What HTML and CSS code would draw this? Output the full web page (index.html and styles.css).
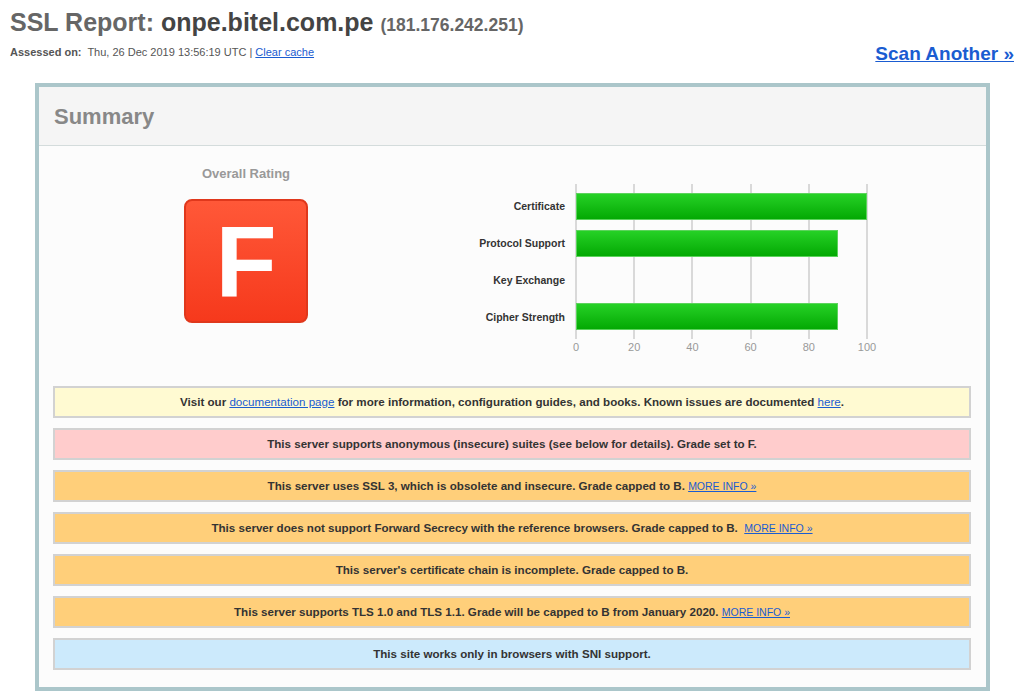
FILE: index.html
```html
<!DOCTYPE html>
<html>
	<head>
		<meta charset="utf-8">
		<title>SSL Report: onpe.bitel.com.pe</title>
		<link rel="stylesheet" href="styles.css">
	</head>
	<body>
		<div class="pageHead">
			<div class="headLeft">
				<h1 class="reportTitle">SSL Report: <b>onpe.bitel.com.pe</b> <span class="ip">(181.176.242.251)</span></h1>
				<div class="assessed">
					<span class="assessedLabel">Assessed on:</span> Thu, 26 Dec 2019 13:56:19 UTC | <a href="">Clear cache</a>
				</div>
			</div>
			<a href="" class="scanAnother">Scan Another &raquo;</a>
		</div>

		<div class="reportBox">
			<div class="reportTitleBar">Summary</div>
			<div class="reportBody">
				<div class="summaryRow">
					<div class="rating">
						<div class="ratingTitle">Overall Rating</div>
						<div class="grade">F</div>
					</div>
					<div class="chart">
						<div class="chartLabels">
							<div>Certificate</div>
							<div>Protocol Support</div>
							<div>Key Exchange</div>
							<div>Cipher Strength</div>
						</div>
						<div class="chartRight">
							<div class="plot">
								<div class="bar" style="width: 291px"></div>
								<div class="bar" style="width: 262px"></div>
								<div class="bar empty"></div>
								<div class="bar" style="width: 262px"></div>
							</div>
							<div class="axis">
								<span>0</span>
								<span>20</span>
								<span>40</span>
								<span>60</span>
								<span>80</span>
								<span>100</span>
							</div>
						</div>
					</div>
				</div>

				<ul class="warnings">
					<li class="tip">Visit our <a href="">documentation page</a> for more information, configuration guides, and books. Known issues are documented <a href="">here</a>.</li>
					<li class="error">This server supports anonymous (insecure) suites (see below for details). Grade set to F.</li>
					<li class="warn">This server uses SSL 3, which is obsolete and insecure. Grade capped to B. <a href="" class="moreInfo">MORE INFO &raquo;</a></li>
					<li class="warn">This server does not support Forward Secrecy with the reference browsers. Grade capped to B.&nbsp; <a href="" class="moreInfo">MORE INFO &raquo;</a></li>
					<li class="warn">This server's certificate chain is incomplete. Grade capped to B.</li>
					<li class="warn">This server supports TLS 1.0 and TLS 1.1. Grade will be capped to B from January 2020. <a href="" class="moreInfo">MORE INFO &raquo;</a></li>
					<li class="info">This site works only in browsers with SNI support.</li>
				</ul>
			</div>
		</div>
	</body>
</html>
```

FILE: styles.css
```css
*{
	padding: 0;
	margin: 0;
	box-sizing: border-box;
}
ul,li{
	list-style: none;
}
body{
	font-family: "Liberation Sans", Arial, sans-serif;
	color: #333;
	background-color: #fff;
}
a{
	color: #1a5cd1;
}
.pageHead{
	display: flex;
	justify-content: space-between;
	align-items: flex-end;
	padding: 6px 10px 0 10px;
}
.reportTitle{
	font-size: 25px;
	font-weight: bold;
	color: #666;
	line-height: 32px;
}
.reportTitle b{
	color: #444;
}
.reportTitle .ip{
	font-size: 17.5px;
	color: #666;
}
.assessed{
	font-size: 11px;
	color: #555;
	margin-top: 3px;
	line-height: 16px;
}
.assessedLabel{
	font-weight: bold;
	color: #555;
	margin-right: 3px;
}
.scanAnother{
	font-size: 19px;
	font-weight: bold;
	line-height: 22px;
	margin-bottom: -5px;
}

.reportBox{
	width: 955px;
	margin: 23px 0 0 35px;
	border: 4px solid #abc6ca;
	background-color: #fcfcfc;
}
.reportTitleBar{
	height: 59px;
	line-height: 60px;
	padding-left: 15px;
	font-size: 22px;
	font-weight: bold;
	color: #888;
	background-color: #f5f5f5;
	border-bottom: 1px solid #d4dcdc;
}
.reportBody{
	padding: 0 15px 17px 14px;
}
.summaryRow{
	display: flex;
	height: 226px;
}
.rating{
	width: 386px;
	display: flex;
	flex-direction: column;
	align-items: center;
	padding-top: 20px;
}
.ratingTitle{
	font-size: 13px;
	font-weight: bold;
	color: #999;
	line-height: 16px;
}
.grade{
	margin-top: 17px;
	width: 124px;
	height: 124px;
	border: 2px solid #e0381c;
	border-radius: 8px;
	background: linear-gradient(#ff5838, #f6391c);
	color: #fff;
	font-size: 100px;
	font-weight: bold;
	text-align: center;
	line-height: 120px;
}
.chart{
	display: flex;
	padding-top: 38px;
}
.chartLabels{
	width: 126px;
	padding: 9px 0;
	display: flex;
	flex-direction: column;
	gap: 10px;
}
.chartLabels div{
	height: 27px;
	line-height: 27px;
	text-align: right;
	font-size: 10.5px;
	font-weight: bold;
	color: #333;
}
.chartRight{
	margin-left: 10px;
}
.plot{
	width: 293px;
	height: 155px;
	padding: 9px 0;
	display: flex;
	flex-direction: column;
	gap: 10px;
	background: repeating-linear-gradient(to right, #d9d9d9 0, #d9d9d9 2px, transparent 2px, transparent 58.2px);
}
.bar{
	height: 27px;
	margin-left: 1px;
	background: linear-gradient(#26d126, #03a903);
	border: 1px solid #5cd35c;
}
.bar.empty{
	background: none;
	border: none;
}
.axis{
	position: relative;
	height: 16px;
	font-size: 11px;
	color: #999;
}
.axis span{
	position: absolute;
	top: 2px;
	width: 30px;
	margin-left: -14px;
	text-align: center;
}
.axis span:nth-child(1){ left: 0; }
.axis span:nth-child(2){ left: 58.2px; }
.axis span:nth-child(3){ left: 116.4px; }
.axis span:nth-child(4){ left: 174.6px; }
.axis span:nth-child(5){ left: 232.8px; }
.axis span:nth-child(6){ left: 291px; }

.warnings{
	margin-top: 14px;
	display: flex;
	flex-direction: column;
	gap: 10px;
}
.warnings li{
	height: 32px;
	line-height: 28px;
	border: 2px solid #d2d2d2;
	text-align: center;
	font-size: 11.6px;
	font-weight: bold;
	color: #333;
}
.warnings li a{
	font-weight: normal;
}
.warnings .tip{
	background-color: #fffad2;
}
.warnings .error{
	background-color: #ffcccc;
}
.warnings .warn{
	background-color: #ffcf7a;
}
.warnings .info{
	background-color: #cceafc;
}
.warnings .moreInfo{
	font-size: 10.5px;
}
```
